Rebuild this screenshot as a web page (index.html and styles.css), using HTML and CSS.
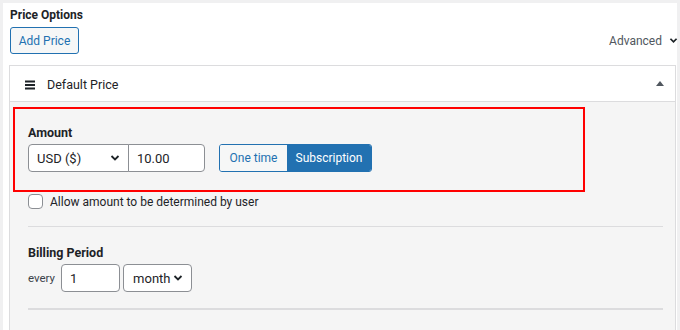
FILE: index.html
```html
<!DOCTYPE html>
<html lang="en">
<head>
    <meta charset="UTF-8">
    <title>Price Options</title>
    <link rel="stylesheet" href="styles.css">
</head>
<body>

    <div class="panel">
        <h2 class="panel-title">Price Options</h2>
        <div class="toolbar">
            <button class="btn-secondary">Add Price</button>
            <span class="advanced">Advanced
                <svg width="9" height="7" viewBox="0 0 10 8"><path d="M1.5 2 L5 5.5 L8.5 2" fill="none" stroke="#1d2327" stroke-width="2"/></svg>
            </span>
        </div>

        <div class="price-card">
            <div class="card-header">
                <svg class="handle" width="10" height="10" viewBox="0 0 10 10">
                    <rect x="0" y="0.5" width="10" height="2" fill="#1d2327"/>
                    <rect x="0" y="4" width="10" height="2" fill="#1d2327"/>
                    <rect x="0" y="7.5" width="10" height="2" fill="#1d2327"/>
                </svg>
                <span class="card-title">Default Price</span>
                <span class="toggle-up"></span>
            </div>

            <div class="card-body">
                <!-- highlighted amount field -->
                <div class="amount-box">
                    <label class="field-label">Amount</label>
                    <div class="amount-row">
                        <div class="currency-group">
                            <div class="select currency">USD ($)
                                <svg width="10" height="8" viewBox="0 0 10 8"><path d="M1.5 2 L5 5.5 L8.5 2" fill="none" stroke="#1d2327" stroke-width="1.8"/></svg>
                            </div>
                            <div class="text-input amount">10.00</div>
                        </div>
                        <div class="segmented">
                            <span class="seg one-time">One time</span>
                            <span class="seg active">Subscription</span>
                        </div>
                    </div>
                </div>

                <div class="check-row">
                    <span class="checkbox"></span>
                    <span>Allow amount to be determined by user</span>
                </div>

                <div class="divider"></div>

                <div class="billing">
                    <label class="field-label">Billing Period</label>
                    <div class="billing-row">
                        <span class="every">every</span>
                        <div class="text-input interval">1</div>
                        <div class="select period">month
                            <svg width="10" height="8" viewBox="0 0 10 8"><path d="M1.5 2 L5 5.5 L8.5 2" fill="none" stroke="#1d2327" stroke-width="1.8"/></svg>
                        </div>
                    </div>
                </div>

                <div class="divider thick"></div>
            </div>
        </div>
    </div>

</body>
</html>
```

FILE: styles.css
```css
body {
    margin: 0;
    height: 330px;
    overflow: hidden;
    background: #f0f0f1;
    font-family: Roboto, "Noto Sans", sans-serif;
    color: #1d2327;
}

.panel {
    margin: 3px 3px 0 3px;
    padding: 0 1px 0 6px;
    background: #fff;
    height: 340px;
}

.panel-title {
    margin: 0;
    padding: 3px 0 0 1px;
    font-size: 12px;
    font-weight: 700;
    line-height: 18px;
}

.toolbar {
    display: flex;
    align-items: center;
    justify-content: space-between;
    margin-top: 3px;
    padding-left: 1px;
}

.btn-secondary {
    height: 27px;
    width: 69px;
    padding: 0;
    border: 1px solid #2271b1;
    border-radius: 3px;
    background: #f6f7f7;
    color: #2271b1;
    font-family: inherit;
    font-size: 12px;
}

.advanced {
    display: flex;
    align-items: center;
    gap: 7px;
    margin-right: -2px;
    font-size: 12px;
    color: #50575e;
}

.price-card {
    margin-top: 11px;
    border: 1px solid #dcdcde;
    background: #f5f5f5;
}

.card-header {
    display: flex;
    align-items: center;
    height: 35px;
    padding: 0 11px 0 15px;
    background: #fff;
    border-bottom: 1px solid #dcdcde;
}

.handle {
    margin-right: 12px;
    margin-top: 2px;
}

.card-title {
    flex: 1;
    padding-top: 2px;
    font-size: 12.5px;
}

.toggle-up {
    width: 0;
    height: 0;
    border-left: 4px solid transparent;
    border-right: 4px solid transparent;
    border-bottom: 5px solid #50575e;
}

.card-body {
    padding: 5px 12px 20px 18px;
}

.amount-box {
    margin-left: -15px;
    width: 542px;
    padding: 15px 13px 18px 13px;
    border: 2px solid #f00;
}

.field-label {
    display: block;
    font-size: 12.5px;
    font-weight: 700;
    line-height: 18px;
    margin-bottom: 2px;
}

.amount-row {
    display: flex;
    align-items: center;
    gap: 14px;
}

.currency-group {
    display: flex;
}

.select,
.text-input {
    display: flex;
    align-items: center;
    box-sizing: border-box;
    height: 28px;
    padding: 0 8px;
    border: 1px solid #8c8f94;
    background: #fff;
    font-size: 13px;
}

.select {
    justify-content: space-between;
}

.currency {
    width: 101px;
    border-radius: 4px 0 0 4px;
}

.amount {
    width: 77px;
    margin-left: -1px;
    border-radius: 0 4px 4px 0;
}

.segmented {
    display: flex;
    height: 28px;
    box-sizing: border-box;
    border: 1px solid #2271b1;
    border-radius: 3px;
    overflow: hidden;
    font-size: 12px;
}

.seg {
    display: flex;
    align-items: center;
    justify-content: center;
    width: 84px;
    background: #f6f7f7;
    color: #2271b1;
}

.seg.one-time {
    width: 67px;
}

.seg.active {
    background: #2271b1;
    color: #fff;
}

.check-row {
    display: flex;
    align-items: center;
    gap: 7px;
    height: 17px;
    margin-top: 1px;
    font-size: 12px;
}

.checkbox {
    width: 13px;
    height: 13px;
    border: 1px solid #8c8f94;
    border-radius: 4px;
    background: #fff;
}

.divider {
    height: 1px;
    margin-top: 16px;
    background: #dcdcde;
}

.divider.thick {
    height: 2px;
    margin-top: 16px;
}

.billing {
    padding-top: 17px;
}

.billing-row {
    display: flex;
    align-items: center;
    gap: 3px;
    margin-top: 2px;
}

.every {
    margin-right: 3px;
    font-size: 11.5px;
    color: #3c434a;
}

.interval {
    width: 59px;
    border-radius: 4px;
}

.period {
    width: 69px;
    padding: 0 8px 0 9px;
    border-radius: 4px;
}
```
